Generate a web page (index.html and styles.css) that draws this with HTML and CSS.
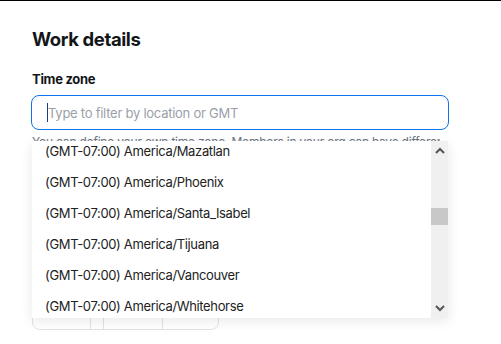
FILE: index.html
```html
<!DOCTYPE html>
<html lang="en">
<head>
    <meta charset="UTF-8">
    <meta name="viewport" content="width=device-width, initial-scale=1.0">
    <title>Work details</title>
    <link rel="stylesheet" href="styles.css">
</head>
<body>
    <div class="panel">
        <h2 class="title">Work details</h2>

        <div class="field">
            <label class="label">Time zone</label>
            <div class="combo">
                <input class="combo-input" type="text" placeholder="Type to filter by location or GMT">
                <span class="caret"></span>

                <div class="dropdown">
                    <ul class="options">
                        <li>(GMT-07:00) America/Mazatlan</li>
                        <li>(GMT-07:00) America/Phoenix</li>
                        <li>(GMT-07:00) America/Santa_Isabel</li>
                        <li>(GMT-07:00) America/Tijuana</li>
                        <li>(GMT-07:00) America/Vancouver</li>
                        <li>(GMT-07:00) America/Whitehorse</li>
                    </ul>
                    <div class="scrollbar">
                        <svg class="arrow" width="10" height="7" viewBox="0 0 10 7"><path d="M1 6 L5 2 L9 6" fill="none" stroke="#555" stroke-width="2"/></svg>
                        <div class="track"><div class="thumb"></div></div>
                        <svg class="arrow" width="10" height="7" viewBox="0 0 10 7"><path d="M1 1 L5 5 L9 1" fill="none" stroke="#555" stroke-width="2"/></svg>
                    </div>
                </div>
            </div>
            <p class="hint">You can define your own time zone. Members in your org can have different time zones.</p>

            <div class="time-group">
                <div class="cell cell-hour"></div>
                <div class="cell cell-sep"></div>
                <div class="cell cell-min"></div>
                <div class="cell cell-ampm"></div>
            </div>
        </div>
    </div>
</body>
</html>
```

FILE: styles.css
```css
body {
    margin: 0;
    padding: 0;
    background-color: #fff;
    color: #131619;
    font-family: Inter, "Open Sans", Arial, sans-serif;
    border-top: 1px solid #000;
}

.panel {
    padding: 26px 0 0 32px;
    width: 418px;
}

.title {
    margin: 0;
    font-size: 18.5px;
    font-weight: 700;
    letter-spacing: -0.4px;
    line-height: 24px;
}

.field {
    margin-top: 20px;
}

.label {
    display: block;
    font-size: 13px;
    font-weight: 700;
    letter-spacing: -0.3px;
    line-height: 16px;
    margin-bottom: 8px;
}

.combo {
    position: relative;
    margin-left: -1px;
}

.combo-input {
    display: block;
    box-sizing: border-box;
    width: 418px;
    height: 35px;
    border: 1.5px solid #0e72ed;
    border-radius: 8px;
    padding: 0 16px;
    font-family: inherit;
    font-size: 13px;
    letter-spacing: -0.25px;
    outline: none;
}

.combo-input::placeholder {
    color: #9aa0a8;
}

.caret {
    position: absolute;
    left: 16px;
    top: 8px;
    width: 1px;
    height: 19px;
    background-color: #1a3a8a;
}

.dropdown {
    position: absolute;
    top: 46px;
    left: 1px;
    width: 416px;
    height: 177px;
    display: flex;
    background-color: #fff;
    box-shadow: 0 3px 12px rgba(0, 0, 0, 0.09);
    z-index: 2;
}

.options {
    list-style: none;
    margin: -5px 0 0 0;
    padding: 0;
    flex: 1;
    overflow: hidden;
}

.options li {
    height: 31px;
    line-height: 31px;
    padding-left: 13px;
    font-size: 13px;
    letter-spacing: -0.35px;
    color: #222;
}

.scrollbar {
    width: 17px;
    background-color: #f0f0f0;
    display: flex;
    flex-direction: column;
    align-items: center;
}

.arrow {
    margin: 6px 0;
}

.track {
    flex: 1;
    width: 100%;
    position: relative;
}

.thumb {
    position: absolute;
    top: 48px;
    left: 0;
    width: 100%;
    height: 17px;
    background-color: #c8c8c8;
}

.hint {
    margin: 4px 0 0 0;
    font-size: 12px;
    letter-spacing: -0.2px;
    line-height: 16px;
    color: #6e7680;
    white-space: nowrap;
    overflow: hidden;
    width: 408px;
}

.time-group {
    display: flex;
    margin-top: 148px;
    width: 187px;
    height: 32px;
    border: 1px solid #dfe3e8;
    border-radius: 8px;
    box-sizing: border-box;
}

.cell {
    border-right: 1px solid #dfe3e8;
}

.cell-hour { width: 57px; }
.cell-sep { width: 12px; }
.cell-min { width: 58px; }
.cell-ampm { flex: 1; border-right: none; }
```
